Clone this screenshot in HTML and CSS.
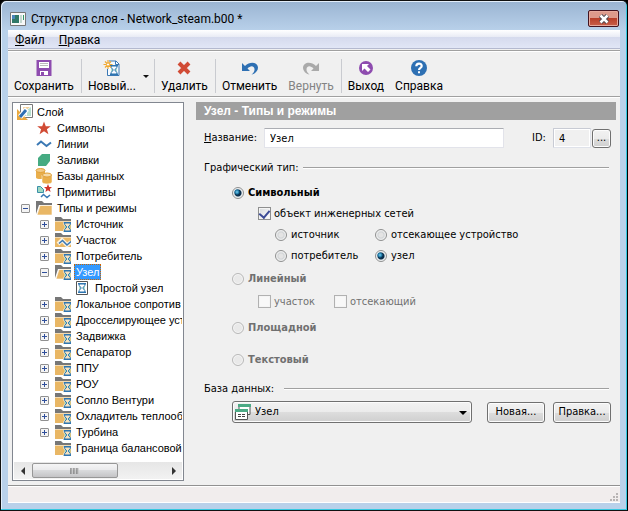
FILE: index.html
```html
<!DOCTYPE html>
<html lang="ru">
<head>
<meta charset="utf-8">
<title>Структура слоя - Network_steam.b00 *</title>
<link rel="stylesheet" href="styles.css">
</head>
<body>
<svg class="defs" aria-hidden="true">
  <symbol id="glass" viewBox="0 0 8 10"><path d="M0 .7h8M0 9.3h8" stroke="#2e75b0" stroke-width="1.4"/><path d="M1.2 1v1.500L3.300 5 1.200 7.500V9M6.800 1v1.500L4.700 5l2.100 2.500V9" fill="#a5dcc4" stroke="#2e75b0"/></symbol>
  <symbol id="folder" viewBox="0 0 16 16"><path d="M0 1h6l2 2h8v2H0z" fill="#777"/><path d="M0 5.500h16V15H0z" fill="#e9b765"/></symbol>
  <symbol id="folder-glass" viewBox="0 0 16 16"><use href="#folder"/><path d="M8 6h8v2l-2 3 2 3v2H8v-2l2-3-2-3z" fill="#f6e3c0"/><use href="#glass" x="8.500" y="6" width="8" height="10"/></symbol>
  <symbol id="folder-line" viewBox="0 0 16 16"><use href="#folder"/><path d="M3 12l4-4 5 5 4-3" fill="none" stroke="#fbf2e0" stroke-width="4"/><path d="M4 11.500l3.500-3L12 13l4-3.500" fill="none" stroke="#3a78b4" stroke-width="1.500"/></symbol>
  <symbol id="folder-open" viewBox="0 0 16 16"><path d="M0 14V1h6l2 2h8v2H3z" fill="#777"/><path d="M4 5.500h12V15H1z" fill="#e9b765" stroke="#fff" stroke-width=".6"/></symbol>
  <symbol id="folder-open-glass" viewBox="0 0 16 16"><use href="#folder-open"/><path d="M8 6h8v2l-2 3 2 3v2H8v-2l2-3-2-3z" fill="#f6e3c0"/><use href="#glass" x="8.500" y="6" width="8" height="10"/></symbol>
</svg>
<div class="window">
  <header class="titlebar">
    <svg class="app-icon" viewBox="0 0 16 14"><path d="M.5.500h15v13H.500z" fill="#f8f8f8" stroke="#777"/><path d="M2 3h7v8H2z" fill="#307868"/><path d="M2 3h3v4H2z" fill="#4b86bb"/><path d="M10 3h2v8h-2z" fill="#c4d8d0"/><path d="M13 3h1v5h-1z" fill="#396"/></svg>
    <h1 class="title">Структура слоя - Network_steam.b00 *</h1>
    <button class="close" aria-label="Закрыть"><svg viewBox="0 0 12 10"><path d="M2.500 1.500l7 7m0-7l-7 7" stroke="#46464f" stroke-width="4.500"/><path d="M2.500 1.500l7 7m0-7l-7 7" stroke="#fff" stroke-width="2.500"/></svg></button>
  </header>
  <div class="client">
    <nav class="menubar"><button><u>Ф</u>айл</button><button><u>П</u>равка</button></nav>
    <div class="toolbar">
      <button class="tool"><svg viewBox="0 0 16 16"><path d="M.5 0h15v16H.500z" fill="#8e4caf"/><path d="M3 2h10v6H3zM4 11h8v4H4z" fill="#fff"/><path d="M4 3.500h8M4 5.500h8" stroke="#bbb"/><path d="M5 12h3v3H5z" fill="#8e4caf"/></svg>Сохранить</button>
      <i class="divider"></i>
      <button class="tool new"><svg viewBox="0 0 16 16"><path d="M5 1h7l3 3v11.500H3.500V9" fill="#f7fbff" stroke="#3a78b4"/><path d="M11.500 1v3.500H15" fill="none" stroke="#3a78b4"/><use href="#glass" x="6" y="5" width="8" height="10"/><path d="M4 0v9M-.5 4.500h9M1 1.500l6 6m0-6l-6 6" stroke="#f0a830" stroke-width="1.200"/><circle cx="4" cy="4.500" r="1.600" fill="#fff" stroke="#f0a830"/></svg>Новый...</button>
      <button class="drop" aria-label="Варианты"><svg viewBox="0 0 6 3"><path d="M0 0h6L3 3z" fill="#111"/></svg></button>
      <i class="divider"></i>
      <button class="tool"><svg viewBox="0 0 16 16"><path d="M3 3l10 10M13 3L3 13" stroke="#d14b35" stroke-width="4"/></svg>Удалить</button>
      <i class="divider"></i>
      <button class="tool"><svg viewBox="0 0 16 16"><path d="M0 3v8h8L5.500 8.500C8 5.500 12 5 12.500 9c.2 2-1 4-3 5.500C13 14 16 11 16 7.500 15.500 2 8 1 3 6z" fill="#2e70b3"/></svg>Отменить</button>
      <button class="tool" disabled><svg viewBox="0 0 16 16"><path d="M16 3v8H8l2.500-2.500C8 5.500 4 5 3.500 9c-.2 2 1 4 3 5.500C3 14 0 11 0 7.500.500 2 8 1 13 6z" fill="#aaa"/></svg>Вернуть</button>
      <i class="divider"></i>
      <button class="tool"><svg viewBox="0 0 16 16"><circle cx="8" cy="8" r="7" fill="#8e4caf"/><path d="M4 4h7L9 6l3.500 3.500-2.500 2.500L6.500 8.500 4 11z" fill="#fff"/></svg>Выход</button>
      <button class="tool"><svg viewBox="0 0 16 16"><circle cx="8" cy="8" r="8" fill="#2e70b3"/><path d="M5.300 6.200C5.300 2.700 10.700 2.700 10.700 6 10.700 8 8 7.700 8 10" fill="none" stroke="#fff" stroke-width="2.200"/><path d="M7 11.300h2v2H7z" fill="#fff"/></svg>Справка</button>
    </div>
    <main class="body">
      <section class="tree">
        <ul class="nodes">
          <li class="root"><svg viewBox="0 0 16 16"><path d="M3.500.500h12v13h-12z" fill="#fff" stroke="#777"/><path d="M6 8l4 4V6l4-3v9H6z" fill="#b5dfd0"/><path d="M6 3h7L7 8z" fill="#f1cf9a"/><path d="M0 5l11 11H0z" fill="#e9a940"/><path d="M3 13l7-8" stroke="#fff" stroke-width="5"/><path d="M3 13l6-7" stroke="#2e70b3" stroke-width="3"/></svg><span>Слой</span></li>
          <li class="l1"><b></b><svg viewBox="0 0 16 16"><path d="M8 1.500l1.800 4.800h5L10.900 9.200l1.500 5L8 11.300l-4.400 2.900 1.500-5-3.900-2.900h5z" fill="#d14b35"/></svg><span>Символы</span></li>
          <li class="l1"><b></b><svg viewBox="0 0 16 16"><path d="M1 9l4-3.500 5.500 4.500L15 6.500" fill="none" stroke="#3a78b4" stroke-width="2"/></svg><span>Линии</span></li>
          <li class="l1"><b></b><svg viewBox="0 0 16 16"><path d="M2 14V6l4-4h8v7l-4 5z" fill="#45ab82"/></svg><span>Заливки</span></li>
          <li class="l1"><b></b><svg viewBox="0 0 16 16"><path d="M0 2.500v7c0 2 9 2 9 0v-7" fill="#e9ae4b"/><ellipse cx="4.500" cy="2.500" rx="4.500" ry="2" fill="#f2ca87" stroke="#e09f36"/><path d="M6 7v7c0 2.500 10 2.500 10 0V7" fill="#e9ae4b" stroke="#fff" stroke-width=".5"/><ellipse cx="11" cy="7" rx="4.500" ry="2" fill="#f5d9a8" stroke="#e09f36"/></svg><span>Базы данных</span></li>
          <li class="l1"><b></b><svg viewBox="0 0 16 16"><path d="M1.500 2.500h3l3 3v3h-6z" fill="#9ed8c2" stroke="#3a8fa8"/><path d="M12 0l1.200 3H16l-2.200 2 .8 3L12 6.300 9.400 8l.8-3L8 3h2.800z" fill="#d1352b"/><path d="M5 13l2.500-2.500L11 13.500l3-2.500" fill="none" stroke="#3a78b4" stroke-width="1.500"/></svg><span>Примитивы</span></li>
          <li class="l1"><button class="toggle" aria-label="Свернуть"></button><svg><use href="#folder-open"/></svg><span>Типы и режимы</span></li>
          <li class="l2"><button class="toggle plus" aria-label="Развернуть"></button><svg><use href="#folder-glass"/></svg><span>Источник</span></li>
          <li class="l2"><button class="toggle plus" aria-label="Развернуть"></button><svg><use href="#folder-line"/></svg><span>Участок</span></li>
          <li class="l2"><button class="toggle plus" aria-label="Развернуть"></button><svg><use href="#folder-glass"/></svg><span>Потребитель</span></li>
          <li class="l2"><button class="toggle" aria-label="Свернуть"></button><svg><use href="#folder-open-glass"/></svg><span class="selected">Узел</span></li>
          <li class="l3"><b></b><svg viewBox="0 0 16 16"><path d="M2.500 1.500h11v13h-11z" fill="#fff" stroke="#555"/><use href="#glass" x="4" y="3" width="8" height="10"/></svg><span>Простой узел</span></li>
          <li class="l2"><button class="toggle plus" aria-label="Развернуть"></button><svg><use href="#folder-glass"/></svg><span>Локальное сопротив</span></li>
          <li class="l2"><button class="toggle plus" aria-label="Развернуть"></button><svg><use href="#folder-glass"/></svg><span>Дросселирующее уст</span></li>
          <li class="l2"><button class="toggle plus" aria-label="Развернуть"></button><svg><use href="#folder-glass"/></svg><span>Задвижка</span></li>
          <li class="l2"><button class="toggle plus" aria-label="Развернуть"></button><svg><use href="#folder-glass"/></svg><span>Сепаратор</span></li>
          <li class="l2"><button class="toggle plus" aria-label="Развернуть"></button><svg><use href="#folder-glass"/></svg><span>ППУ</span></li>
          <li class="l2"><button class="toggle plus" aria-label="Развернуть"></button><svg><use href="#folder-glass"/></svg><span>РОУ</span></li>
          <li class="l2"><button class="toggle plus" aria-label="Развернуть"></button><svg><use href="#folder-glass"/></svg><span>Сопло Вентури</span></li>
          <li class="l2"><button class="toggle plus" aria-label="Развернуть"></button><svg><use href="#folder-glass"/></svg><span>Охладитель теплообм</span></li>
          <li class="l2"><button class="toggle plus" aria-label="Развернуть"></button><svg><use href="#folder-glass"/></svg><span>Турбина</span></li>
          <li class="l2"><b></b><svg><use href="#folder-glass"/></svg><span>Граница балансовой</span></li>
        </ul>
        <div class="scrollbar">
          <button class="arrow" aria-label="Влево"><svg viewBox="0 0 4 8"><path d="M4 0v8L0 4z" fill="#333"/></svg></button>
          <div class="track"><div class="thumb"><svg viewBox="0 0 9 6"><path d="M1 0v6M4 0v6M7 0v6" stroke="#555"/><path d="M2 0v6M5 0v6M8 0v6" stroke="#bbb"/></svg></div></div>
          <button class="arrow" aria-label="Вправо"><svg viewBox="0 0 4 8"><path d="M0 0v8l4-4z" fill="#333"/></svg></button>
        </div>
      </section>
      <form class="panel">
        <h2 class="heading">Узел - Типы и режимы</h2>
        <div class="fields">
          <div class="name-row">
            <label class="name-label" for="name"><u>Н</u>азвание:</label>
            <input class="text name" id="name" value="Узел">
            <label class="id-label" for="id">ID:</label>
            <input class="text id" id="id" value="4" readonly>
            <button type="button" class="btn more">...</button>
          </div>
          <div class="group-title">Графический тип:<i></i></div>
          <div class="types">
            <label class="opt strong"><input type="radio" name="type" checked>Символьный</label>
            <div class="checks"><label class="opt"><input type="checkbox" checked>объект инженерных сетей</label></div>
            <div class="kinds">
              <label class="opt"><input type="radio" name="kind">источник</label>
              <label class="opt"><input type="radio" name="kind">отсекающее устройство</label>
              <label class="opt"><input type="radio" name="kind">потребитель</label>
              <label class="opt"><input type="radio" name="kind" checked>узел</label>
            </div>
            <label class="opt strong off"><input type="radio" name="type" disabled>Линейный</label>
            <div class="checks"><label class="opt off"><input type="checkbox" disabled>участок</label><label class="opt off"><input type="checkbox" disabled>отсекающий</label></div>
            <label class="opt strong off tall"><input type="radio" name="type" disabled>Площадной</label>
            <label class="opt strong off tall"><input type="radio" name="type" disabled>Текстовый</label>
          </div>
          <div class="group-title db">База данных:<i></i></div>
          <div class="db-row">
            <div class="combo">
              <select aria-label="База данных"><option>Узел</option></select>
              <svg class="combo-icon" viewBox="0 0 16 16"><path d="M4 1.500h11v9H4z" fill="#fff" stroke="#555"/><path d="M3 0h13v3H3z" fill="#4caa85"/><path d="M.500 6h12v9.500H.500z" fill="#fff" stroke="#555"/><path d="M0 5h13v3H0z" fill="#4caa85"/><path d="M3 10.500h3m1 0h3M3 12.500h3m1 0h3" stroke="#444"/></svg>
              <svg class="combo-arrow" viewBox="0 0 8 4"><path d="M0 0h8L4 4z" fill="#000"/></svg>
            </div>
            <button type="button" class="btn">Новая...</button>
            <button type="button" class="btn">Правка...</button>
          </div>
        </div>
      </form>
    </main>
    <footer class="status"><svg viewBox="0 0 8 8"><path d="M6 0h2v2H6zM3 3h2v2H3zM6 3h2v2H6zM0 6h2v2H0zM3 6h2v2H3zM6 6h2v2H6z" fill="#b8b4b4"/></svg></footer>
  </div>
</div>
</body>
</html>
```
FILE: styles.css
```css
* { box-sizing: border-box; }
body { margin: 0; background: #000; font: 11px/16px "DejaVu Sans Condensed", "Noto Sans", sans-serif; color: #000; }
button, input, select { font: inherit; color: inherit; margin: 0; }
button { padding: 0; border: 0; background: none; }
svg { display: block; flex: none; overflow: visible; }
ul { list-style: none; margin: 0; padding: 0; }
.defs { position: absolute; width: 0; height: 0; }

.window {
  min-height: 100vh; display: flex; flex-direction: column;
  border: 1px solid #111; border-right-color: #000; border-radius: 6px 6px 0 0;
  padding: 0 7px 7px 7px; background: linear-gradient(#9ab4d2, #b9d1ea 30px);
  box-shadow: inset -1px -1px #35c8e0, inset 1px 1px #e3eefa;
}
.titlebar { height: 29px; display: flex; align-items: center; gap: 5px; padding: 6px 1px 0 2px; }
.app-icon { width: 16px; height: 14px; }
.title { flex: 1; margin: 0; font: 12px/18px Roboto, "Noto Sans", sans-serif; }
.close { width: 31px; height: 17px; border: 1px solid #431420; border-radius: 2px; box-shadow: inset 0 0 0 1px #e6a99c; background: linear-gradient(#dd9a8b 50%, #b8402a 50%, #c9604a); display: grid; place-items: center; }
.close svg { width: 12px; height: 10px; }

.client { flex: 1; display: flex; flex-direction: column; background: #f0f0f0; }
.menubar { height: 19px; display: flex; gap: 14px; padding-left: 7px; border-bottom: 1px solid #b4b9cf; background: linear-gradient(#fff, #e8ebf5 7px, #d5daed 7px, #e1e6f6); font: 12px/20px Roboto, "Noto Sans", sans-serif; }
.toolbar { display: flex; height: 47px; margin-top: 1px; padding: 8px 6px 0; border-top: 1px solid #a0a0a0; border-bottom: 1px solid #a0a0a0; box-shadow: inset 0 1px #fff, 0 1px #fff; font: 12px/18px Roboto, "Noto Sans", sans-serif; }
.tool { display: flex; flex-direction: column; align-items: center; flex: 0 1 auto; padding: 1px 6px 0; gap: 1px; margin-left: -6px; }
.tool + .tool { margin-left: -1px; }
.divider + .tool { margin-left: 0; }
.tool svg { width: 16px; height: 16px; }
.tool:disabled { color: #838383; }
.drop { width: 13px; height: 34px; margin-left: -2px; display: grid; place-items: center; }
.drop svg { width: 6px; height: 3px; }
.divider { width: 1px; height: 34px; background: #c9cbd0; margin-left: 1px; }

.body { flex: 1; display: flex; gap: 12px; padding: 5px 4px 4px; }
.tree { width: 172px; flex: none; display: flex; flex-direction: column; border: 1px solid #828790; background: #fff; padding: 1px; font: 11px/16px "Liberation Sans", sans-serif; }
.nodes { flex: 1; overflow: hidden; }
.nodes li { height: 16px; display: flex; align-items: center; white-space: nowrap; }
.nodes svg { width: 16px; height: 16px; margin-right: 5px; }
.nodes b, .toggle { width: 9px; height: 9px; flex: none; margin-right: 6px; }
.nodes .root { padding-left: 3px; }
.root svg { margin-right: 4px; }
.l1 { padding-left: 7px; }
.l2 { padding-left: 26px; }
.l3 { padding-left: 45px; }
.toggle { border: 1px solid #919191; border-radius: 1px; background: linear-gradient(#2f4f9b, #2f4f9b) center / 5px 1px no-repeat, #f4f4f4; }
.plus { background: linear-gradient(#2f4f9b, #2f4f9b) center / 5px 1px no-repeat, linear-gradient(#2f4f9b, #2f4f9b) center / 1px 5px no-repeat, #f4f4f4; }
.selected { background: #39f; color: #fff; outline: 1px dotted #c60; outline-offset: -1px; padding: 0 2px; margin-left: -2px; }
.scrollbar { height: 17px; display: flex; background: linear-gradient(#e6e6e6, #f2f2f2); }
.arrow { width: 17px; display: grid; place-items: center; }
.arrow svg { width: 4px; height: 8px; }
.track { flex: 1; display: flex; }
.thumb { width: 64%; margin: 1px; border: 1px solid #979797; border-radius: 2px; display: grid; place-items: center; background: linear-gradient(#f5f5f5, #e9e9eb 50%, #d9dadc 50%, #c4c4c6); }
.thumb svg { width: 9px; height: 6px; }

.panel { flex: 1; min-width: 0; }
.heading { margin: 0; background: #a0a0a0; color: #fff; padding-left: 8px; font: bold 12px/18px "Liberation Sans", sans-serif; }
.fields { padding: 8px 5px 0 8px; }
.name-row { display: flex; align-items: center; }
.name-label { width: 60px; }
.text { height: 20px; min-width: 0; padding: 0 5px; border: 1px solid #e2e3ea; border-top-color: #abadb3; border-radius: 1px; background: #fff; }
.name { flex: 1; }
.id-label { margin-left: 28px; width: 21px; }
.id { width: 38px; background: #f0f0f0; box-shadow: inset 0 0 0 1px #fff; border-color: #c8cbd4 #dfe2ea #dfe2ea #c8cbd4; }
.btn { flex: none; width: 58px; height: 21px; border: 1px solid #707070; border-radius: 3px; box-shadow: inset 0 0 0 1px #fcfcfc; background: linear-gradient(#f2f2f2, #ebebeb 50%, #dddddd 50%, #cfcfcf); }
.more { width: 19px; height: 19px; margin-left: 1px; }
.group-title { display: flex; align-items: center; gap: 4px; margin: 12px 2px 0 0; }
.group-title i { flex: 1; height: 2px; background: #a0a0a0; border-bottom: 1px solid #fff; }
.db { gap: 10px; margin-top: 5px; }
.types { display: flex; flex-direction: column; padding: 6px 0 0 28px; }
.opt { display: flex; align-items: center; height: 21px; gap: 4px; white-space: nowrap; }
.strong { font-weight: bold; }
.off { color: #707070; }
.tall { height: 32px; }
.checks { display: flex; padding-left: 26px; }
.checks .opt { gap: 3px; }
.checks .opt + .opt { margin-left: 19px; }
.kinds { display: grid; grid-template-columns: 100px auto; padding-left: 43px; }
.kinds + .strong { height: 25px; }
.opt input { appearance: none; width: 12px; height: 12px; flex: none; border: 1px solid #8e8f8f; border-radius: 50%; background: radial-gradient(circle, #e4e4e4 2px, #d2d5d7 3px, #f8f8f8 5px); }
.opt input[type=radio]:checked { background: radial-gradient(circle at 4px 4px, #7ed4f5, #17719f 2px, transparent 3px), radial-gradient(circle, #0c2f4c 3px, #dfe6ea 4px, #f8f8f8 5px); }
.opt input[type=checkbox] { width: 13px; height: 13px; border-radius: 0; background: linear-gradient(135deg, #d6d9dc, #fff); box-shadow: inset 0 0 0 1px #f4f4f4; }
.opt input[type=checkbox]:checked { display: grid; place-items: center; }
.opt input[type=checkbox]:checked::after { content: ""; width: 5px; height: 8px; border: solid #3c4b96; border-width: 0 2px 2px 0; transform: rotate(40deg); margin-bottom: 2px; }
.opt input[type=radio]:disabled { border-color: #b9b9b9; background: #e9e9e9; box-shadow: inset 0 0 0 1px #f6f6f6; }
.opt input[type=checkbox]:disabled { border-color: #b1b1b1; background: #f8f8f8; }
.db-row { display: flex; align-items: center; gap: 8px; padding: 4px 0 0 28px; }
.combo { flex: 1; position: relative; margin-right: 7px; }
.combo select { appearance: none; display: block; width: 100%; height: 22px; padding: 0 20px 0 22px; border: 1px solid #707070; border-radius: 3px; box-shadow: inset 0 0 0 1px #fcfcfc; background: linear-gradient(#f2f2f2, #ebebeb 50%, #dddddd 50%, #cfcfcf); }
.combo-icon { position: absolute; left: 3px; top: 3px; width: 16px; height: 16px; pointer-events: none; }
.combo-arrow { position: absolute; right: 5px; top: 10px; width: 8px; height: 4px; pointer-events: none; }

.status { height: 18px; display: flex; justify-content: flex-end; align-items: flex-end; border-top: 1px solid #919191; border-bottom: 1px solid #fff; padding: 0 2px 1px 0; background: #f1eded; box-shadow: inset 0 1px #fff; }
.status svg { width: 8px; height: 8px; }
```
